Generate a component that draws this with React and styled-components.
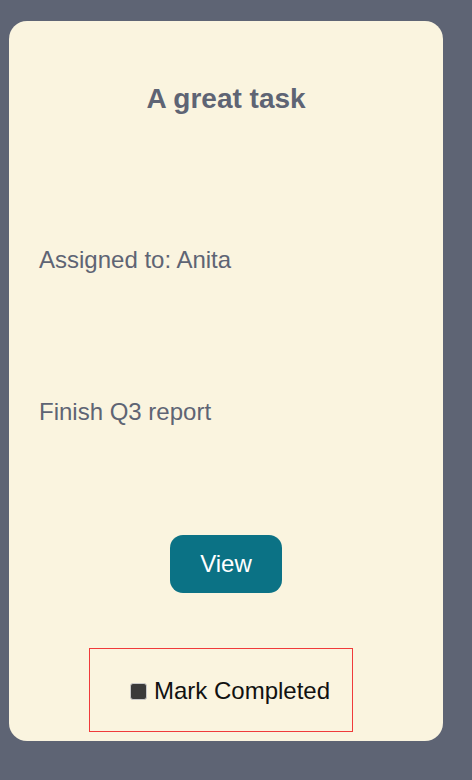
import React, { useState } from "react";
import styled, { createGlobalStyle } from "styled-components";

const GlobalStyle = createGlobalStyle`
  body {
    margin: 0;
    background-color: #5e6474;
    font-family: "Liberation Sans", Arial, sans-serif;
  }
`;

function App() {
  const [done, setDone] = useState(false);

  return (
    <Page>
      <GlobalStyle />
      <Card>
        <Title>A great task</Title>
        <Detail gap={131}>Assigned to: Anita</Detail>
        <Detail gap={124}>Finish Q3 report</Detail>
        <ViewButton>View</ViewButton>
        <CompleteBox>
          <CompleteLabel>
            <Check
              type="checkbox"
              checked={done}
              onChange={(e) => setDone(e.target.checked)}
            />
            Mark Completed
          </CompleteLabel>
        </CompleteBox>
      </Card>
    </Page>
  );
}

const Page = styled.div`
  padding: 21px 29px 39px 9px;
`;

const Card = styled.div`
  background-color: #faf4df;
  border-radius: 18px;
  padding: 62px 30px 9px 30px;
  display: flex;
  flex-direction: column;
`;

const Title = styled.h2`
  margin: 0;
  text-align: center;
  font-size: 28px;
  line-height: 32px;
  font-weight: bold;
  color: #5e6474;
`;

const Detail = styled.p`
  margin: ${(p) => p.gap}px 0 0 0;
  font-size: 24px;
  line-height: 28px;
  color: #5e6474;
`;

const ViewButton = styled.button`
  align-self: center;
  margin-top: 109px;
  width: 112px;
  height: 58px;
  border: none;
  border-radius: 13px;
  background-color: #0b7285;
  color: #ffffff;
  font-family: "Liberation Sans", Arial, sans-serif;
  font-size: 24px;
  cursor: pointer;
`;

const CompleteBox = styled.div`
  margin: 55px 0 0 50px;
  width: 264px;
  height: 84px;
  box-sizing: border-box;
  border: 1px solid #f03a3a;
  display: flex;
  align-items: center;
  padding: 2px 0 0 40px;
`;

const CompleteLabel = styled.label`
  display: flex;
  align-items: center;
  gap: 7px;
  font-size: 24px;
  color: #111111;
`;

const Check = styled.input`
  appearance: none;
  margin: 0;
  width: 17px;
  height: 17px;
  border: 1px solid #c9c9c9;
  border-radius: 3px;
  background-color: #3a3a3a;
  box-sizing: border-box;
`;

export default App;
